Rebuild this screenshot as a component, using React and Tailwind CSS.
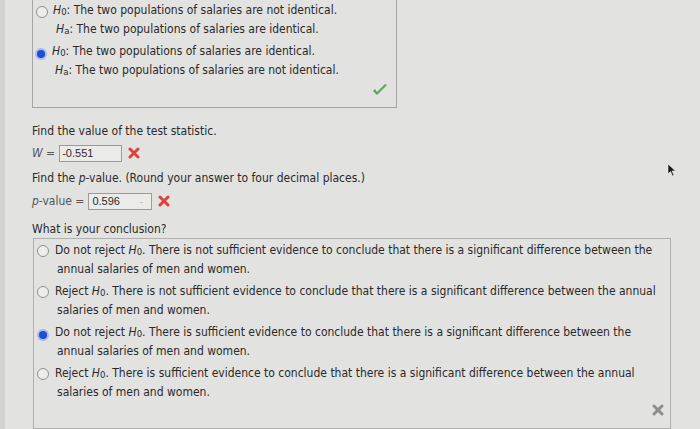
import React from "react";

const font = { fontFamily: '"DejaVu Sans Condensed","DejaVu Sans",sans-serif' };

function Radio({ on }) {
  if (on)
    return (
      <span className="inline-flex shrink-0 w-[12px] h-[12px] rounded-full bg-[#a8bdec] items-center justify-center">
        <span className="w-[8px] h-[8px] rounded-full bg-[#1f4fd0]" />
      </span>
    );
  return <span className="inline-block shrink-0 w-[12px] h-[12px] rounded-full border border-[#8f8f8d] bg-[#ededeb]" />;
}

function H({ s }) {
  return (
    <span>
      <i>H</i>
      <sub className="text-[9.5px] relative top-[1px]">{s}</sub>
    </span>
  );
}

function Check() {
  return (
    <svg width="16" height="14" viewBox="0 0 16 14">
      <path d="M1 8 L5 12 L15 2 L13 1 L5 9 L3 6 Z" fill="#5aa85a" />
    </svg>
  );
}

function RedX({ color = "#e0403a" }) {
  return (
    <svg width="12" height="12" viewBox="0 0 12 12">
      <path d="M2 2 L10 10 M10 2 L2 10" stroke={color} strokeWidth="3" strokeLinecap="round" />
    </svg>
  );
}

export default function App() {
  return (
    <div
      className="relative w-[700px] h-[429px] overflow-hidden bg-[#e2e2e0] text-[#2a2a2a] text-[12px]"
      style={font}
    >
      <div className="absolute left-0 top-0 w-[5px] h-full bg-[#d2d2d0]" />
      {/* top box */}
      <div className="relative ml-[32px] -mt-[3px] w-[365px] h-[111px] border border-[#a5a5a3] pt-[3px]">
        <div className="flex gap-[5px]">
          <div className="pt-[4px] pl-[3px]"><Radio /></div>
          <div className="leading-[19px]">
            <div><H s="0" />: The two populations of salaries are not identical.</div>
            <div className="pl-[3px]"><H s="a" />: The two populations of salaries are identical.</div>
          </div>
        </div>
        <div className="flex gap-[5px] mt-[3px]">
          <div className="pt-[3px] pl-[2px]"><Radio on /></div>
          <div className="leading-[19px]">
            <div><H s="0" />: The two populations of salaries are identical.</div>
            <div className="pl-[3px]"><H s="a" />: The two populations of salaries are not identical.</div>
          </div>
        </div>
        <div className="absolute right-[8px] bottom-[10px]"><Check /></div>
      </div>

      <div className="ml-[32px] mt-[14px]">Find the value of the test statistic.</div>
      <div className="ml-[32px] mt-[4px] flex items-center">
        <span className="text-[#555]"><i>W</i> =</span>
        <span className="ml-[4px] w-[63px] h-[17px] border border-[#9a9a98] bg-[#ebebe9] text-[11px] leading-[15px] pl-[2px]" style={{fontFamily:'"Liberation Sans",sans-serif'}}>-0.551</span>
        <span className="ml-[6px] flex"><RedX /></span>
      </div>
      <div className="ml-[32px] mt-[7px]">Find the <i>p</i>-value. (Round your answer to four decimal places.)</div>
      <div className="ml-[32px] mt-[5px] flex items-center">
        <span className="text-[#555]"><i>p</i>-value =</span>
        <span className="ml-[4px] w-[64px] h-[17px] border border-[#9a9a98] bg-[#ebebe9] text-[11px] leading-[15px] pl-[3px] flex justify-between pr-[8px]" style={{fontFamily:'"Liberation Sans",sans-serif'}}>0.596<span className="text-[#bbb]">-</span></span>
        <span className="ml-[6px] flex"><RedX /></span>
      </div>
      <div className="ml-[32px] mt-[10px]">What is your conclusion?</div>

      <div className="relative ml-[33px] mt-0 w-[638px] h-[191px] border border-[#b0b0ae] pl-[3px] pt-[2px] leading-[19px]">
        {[
          [false, "Do not reject", "There is not sufficient evidence to conclude that there is a significant difference between the", "annual salaries of men and women."],
          [false, "Reject", "There is not sufficient evidence to conclude that there is a significant difference between the annual", "salaries of men and women."],
          [true, "Do not reject", "There is sufficient evidence to conclude that there is a significant difference between the", "annual salaries of men and women."],
          [false, "Reject", "There is sufficient evidence to conclude that there is a significant difference between the annual", "salaries of men and women."],
        ].map(([on, a, b, c], i) => (
          <div key={i} className={"flex gap-[6px] " + (i === 0 ? "mt-0" : "mt-[3px]")}>
            <div className="pt-[3px]"><Radio on={on} /></div>
            <div>
              <div>{a} <H s="0" />. {b}</div>
              <div className="pl-[2px]">{c}</div>
            </div>
          </div>
        ))}
        <div className="absolute right-[6px] bottom-[12px]"><RedX color="#8d8d8d" /></div>
      </div>

      <svg className="absolute left-[667px] top-[163px]" width="10" height="14" viewBox="0 0 10 14">
        <path d="M1 1 L1 11 L3.5 8.5 L5.5 13 L7 12.3 L5 8 L8.5 8 Z" fill="#1a1a1a" stroke="#eee" strokeWidth="0.6" />
      </svg>
    </div>
  );
}
